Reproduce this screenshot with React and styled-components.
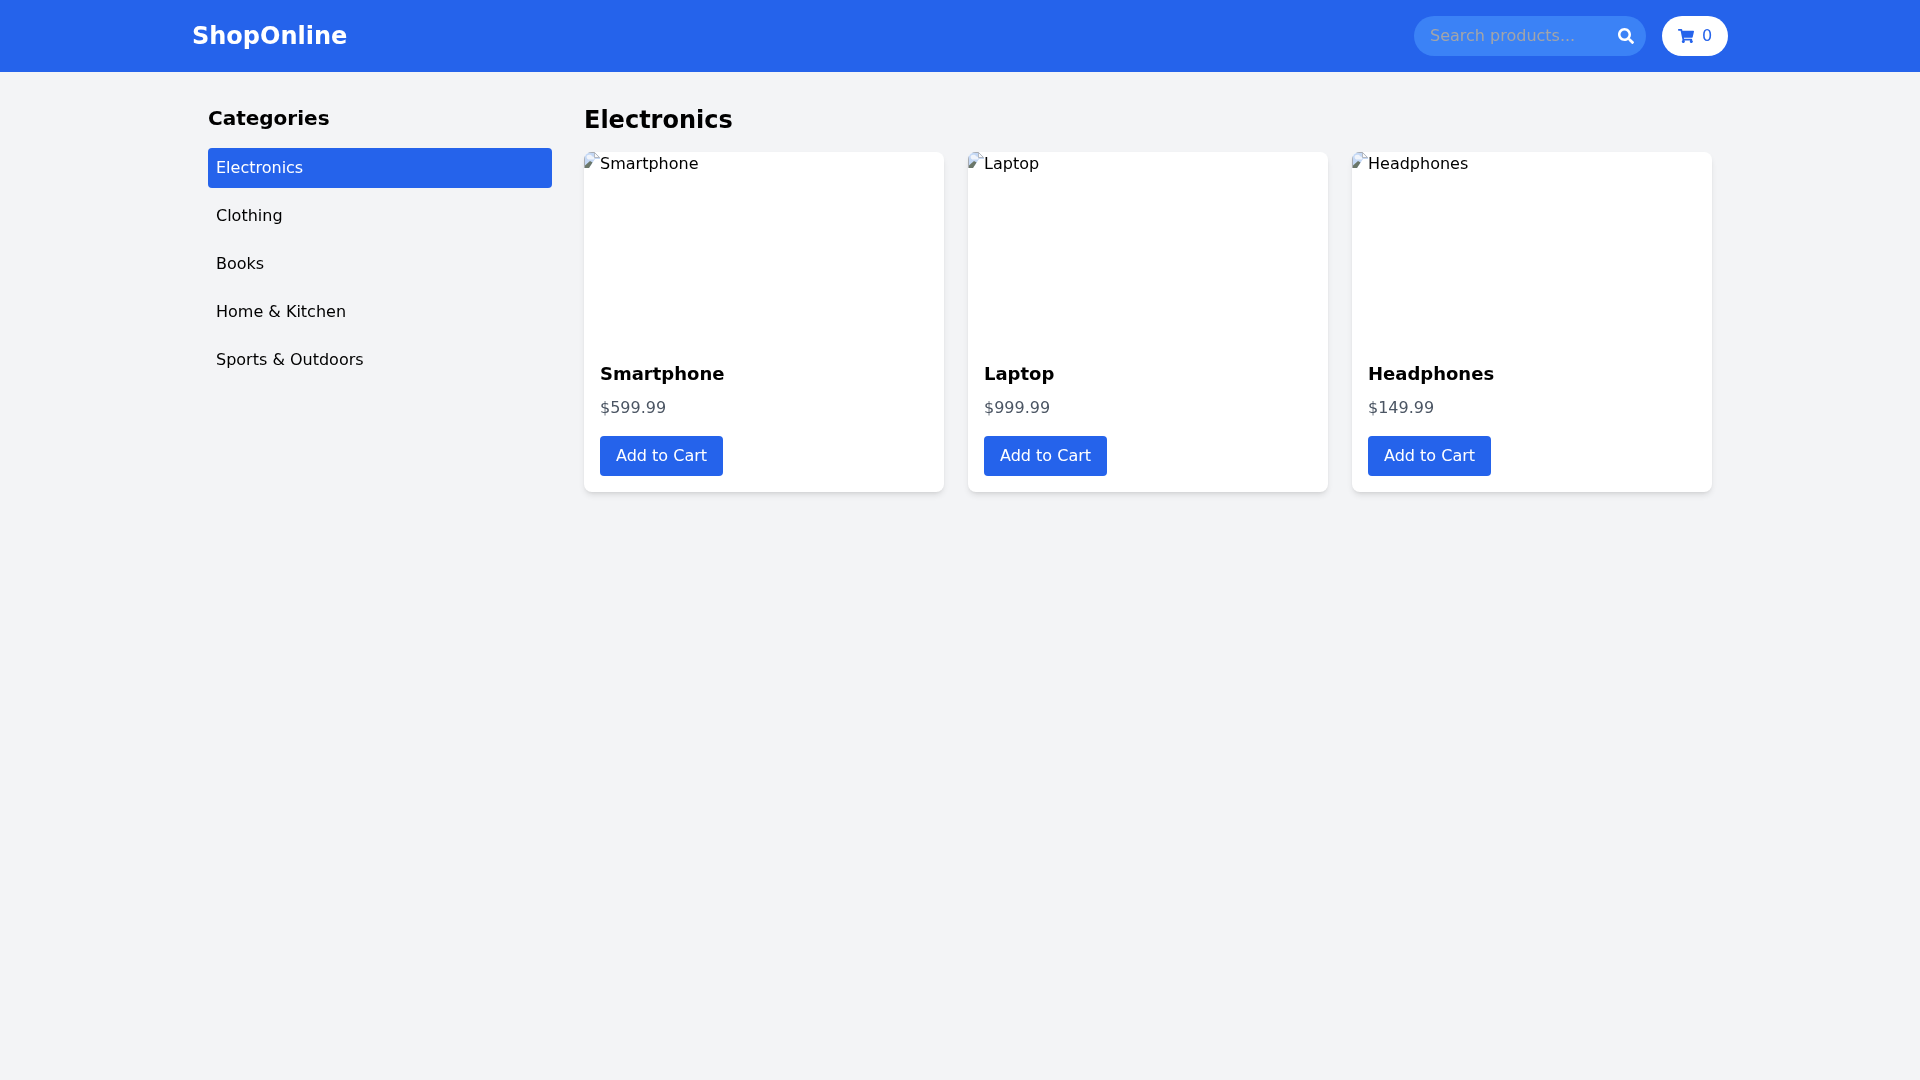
import React from 'react';
import styled, { createGlobalStyle } from 'styled-components';
import { FaSearch, FaShoppingCart } from 'react-icons/fa';

const Global = createGlobalStyle`
  * { box-sizing: border-box; }
  html, body { margin: 0; padding: 0; }
  body {
    background: #f3f4f6;
    min-height: 100vh;
    font-family: "DejaVu Sans", sans-serif;
    font-size: 16px;
    line-height: 24px;
    color: #000;
  }
  #root { will-change: transform; }
`;

const Header = styled.header`
  background: #2563eb;
  color: #fff;
  padding: 16px 0;
`;
const HeaderInner = styled.div`
  width: 1536px;
  margin: 0 auto;
  display: flex;
  align-items: center;
  justify-content: space-between;
`;
const Logo = styled.h1`
  margin: 0;
  font-size: 24px;
  line-height: 40px;
  height: 40px;
  font-weight: 700;
`;
const HeaderRight = styled.div`
  display: flex;
  align-items: center;
  gap: 16px;
`;
const SearchBox = styled.div`
  position: relative;
  width: 232px;
  height: 40px;
`;
const SearchInput = styled.input`
  width: 100%;
  height: 100%;
  border: 0;
  outline: 0;
  padding: 7px 16px 9px;
  border-radius: 9999px;
  background: #3b82f6;
  color: #fff;
  font-family: inherit;
  font-size: 16px;
  &::placeholder { color: #a3a5a9; opacity: 1; }
`;
const SearchIcon = styled.span`
  position: absolute;
  right: 12px;
  top: 12px;
  width: 16px;
  height: 16px;
  display: flex;
  color: #fff;
`;
const CartButton = styled.button`
  display: flex;
  align-items: center;
  gap: 8px;
  width: 66px;
  height: 40px;
  padding: 8px 0 8px 16px;
  border: 0;
  border-radius: 9999px;
  background: #fff;
  color: #2563eb;
  font-family: inherit;
  font-size: 16px;
  font-weight: 400;
  line-height: 24px;
`;
const Container = styled.div`
  width: 1536px;
  margin: 0 auto;
  padding: 32px 16px;
  display: flex;
`;
const Sidebar = styled.aside`
  width: 376px;
  padding-right: 32px;
  flex: none;
`;
const SideTitle = styled.h2`
  margin: 0 0 16px;
  font-size: 20px;
  line-height: 28px;
  font-weight: 700;
`;
const CatList = styled.ul`
  list-style: none;
  margin: 0;
  padding: 0;
  display: flex;
  flex-direction: column;
  gap: 8px;
`;
const CatItem = styled.li`
  height: 40px;
  padding: 8px;
  border-radius: 4px;
  background: ${p => (p.$active ? '#2563eb' : 'transparent')};
  color: ${p => (p.$active ? '#fff' : '#000')};
`;
const Main = styled.main`
  flex: 1;
`;
const MainTitle = styled.h2`
  margin: 0 0 16px;
  font-size: 24px;
  line-height: 32px;
  font-weight: 700;
`;
const Grid = styled.div`
  display: grid;
  grid-template-columns: repeat(3, 360px);
  gap: 24px;
`;
const Card = styled.article`
  background: #fff;
  border-radius: 8px;
  overflow: hidden;
  box-shadow: 0 4px 6px -1px rgba(0,0,0,.1), 0 2px 4px -2px rgba(0,0,0,.1);
`;
const ImageSlot = styled.div`
  height: 192px;
  display: flex;
  align-items: flex-start;
`;
const BrokenIcon = styled.svg`
  flex: none;
  width: 16px;
  height: 16px;
`;
const CardBody = styled.div`
  padding: 16px;
`;
const ProductName = styled.h3`
  margin: 0 0 8px;
  font-size: 18px;
  line-height: 28px;
  font-weight: 700;
`;
const Price = styled.p`
  margin: 0 0 16px;
  color: #4b5563;
`;
const AddButton = styled.button`
  display: block;
  height: 40px;
  padding: 8px 16px;
  border: 0;
  border-radius: 4px;
  background: #2563eb;
  color: #fff;
  font-family: inherit;
  font-size: 16px;
  line-height: 24px;
`;

const Broken = () => (
  <BrokenIcon viewBox="0 0 16 16" aria-hidden="true">
    <path d="M0 0H10.5L16 5.5V7H11L5 16H0Z" fill="#c4d8f5" />
    <path d="M3 3.5C5 2 7.5 2.5 8.5 4.5C10 4.5 11 6 10 7.5H5C3 7.5 2 5 3 3.5Z" fill="#f0f4fb" />
    <path d="M10.5 0.5L15.5 5.5H10.5Z" fill="#fafafa" stroke="#a8acb2" strokeWidth="0.8" />
    <path d="M0.5 16V0.5H10.5" fill="none" stroke="#a8acb2" />
    <path d="M1 16V13.5L6 9L8.5 10.5L5 16Z" fill="#6b7769" />
  </BrokenIcon>
);

const categories = ['Electronics', 'Clothing', 'Books', 'Home & Kitchen', 'Sports & Outdoors'];
const products = [
  { name: 'Smartphone', price: '$599.99' },
  { name: 'Laptop', price: '$999.99' },
  { name: 'Headphones', price: '$149.99' },
];

export default function App() {
  return (
    <>
      <Global />
      <Header>
        <HeaderInner>
          <Logo>ShopOnline</Logo>
          <HeaderRight>
            <SearchBox>
              <SearchInput placeholder="Search products..." />
              <SearchIcon><FaSearch size={16} /></SearchIcon>
            </SearchBox>
            <CartButton><FaShoppingCart size={16} /><span>0</span></CartButton>
          </HeaderRight>
        </HeaderInner>
      </Header>
      <Container>
        <Sidebar>
          <SideTitle>Categories</SideTitle>
          <CatList>
            {categories.map((c, i) => <CatItem key={c} $active={i === 0}>{c}</CatItem>)}
          </CatList>
        </Sidebar>
        <Main>
          <MainTitle>Electronics</MainTitle>
          <Grid>
            {products.map(p => (
              <Card key={p.name}>
                <ImageSlot><Broken />{p.name}</ImageSlot>
                <CardBody>
                  <ProductName>{p.name}</ProductName>
                  <Price>{p.price}</Price>
                  <AddButton>Add to Cart</AddButton>
                </CardBody>
              </Card>
            ))}
          </Grid>
        </Main>
      </Container>
    </>
  );
}
